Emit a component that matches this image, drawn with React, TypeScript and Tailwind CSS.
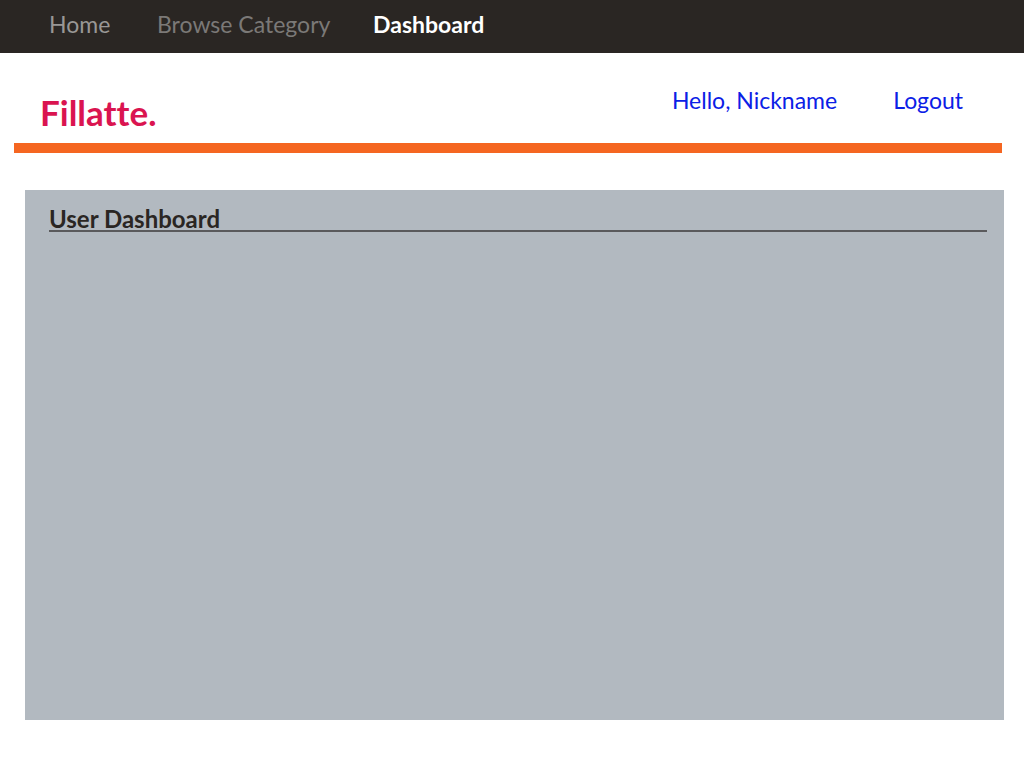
import React from "react";

const links = [
  { label: "Home", style: "w-[108px] text-[#999795]" },
  { label: "Browse Category", style: "w-[216px] text-[#7b7977]" },
  { label: "Dashboard", style: "font-bold text-white" },
];

export default function App() {
  return (
    <div className="min-h-screen bg-white pb-12 font-['Lato',sans-serif] text-[23px] leading-8 [font-variant-ligatures:none]">
      <nav aria-label="Main" className="flex h-[53px] items-center bg-[#2a2623] pb-1.5 pl-[49px]">
        {links.map((link) => (
          <a key={link.label} href="#" className={link.style}>
            {link.label}
          </a>
        ))}
      </nav>

      <header className="ml-[14px] mr-[22px] flex h-[100px] items-start justify-between border-b-10 border-[#f56621] pl-[26px] pr-[39px]">
        <a href="#" className="pt-[39px] text-[35px] leading-10 font-bold text-[#da1450]">
          Fillatte.
        </a>
        <div className="flex gap-14 pt-[31px] text-[#0b20e6]">
          <a href="#">Hello, Nickname</a>
          <a href="#">Logout</a>
        </div>
      </header>

      <main className="ml-[25px] mr-5 mt-[37px] min-h-[530px] bg-[#b2b9c0] pl-6 pr-[17px] pt-[18px]">
        <h1 className="border-b-2 border-[#5a5a5c] text-2xl leading-[22px] font-bold text-[#2a2623]">
          User Dashboard
        </h1>
      </main>
    </div>
  );
}
